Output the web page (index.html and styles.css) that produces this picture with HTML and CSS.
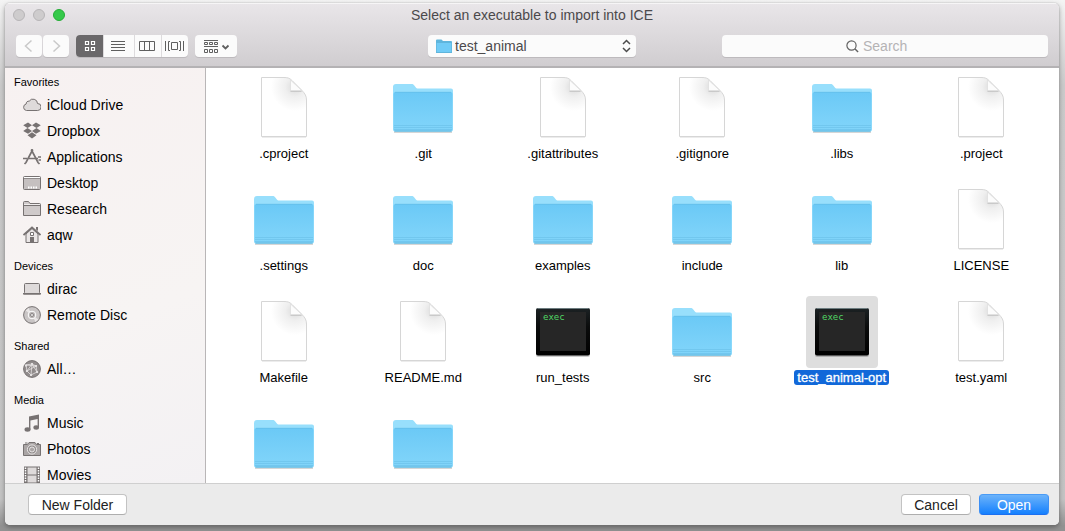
FILE: index.html
```html
<!DOCTYPE html>
<html lang="en">
<head>
<meta charset="utf-8">
<title>Select an executable to import into ICE</title>
<link rel="stylesheet" href="styles.css">
</head>
<body>
<svg class="defs" width="0" height="0" aria-hidden="true">
  <defs>
    <linearGradient id="folder-front" x1="0" y1="0" x2="0" y2="1">
      <stop offset="0" stop-color="#6bc9f6"/>
      <stop offset="1" stop-color="#82d5fa"/>
    </linearGradient>
    <radialGradient id="page-shade" gradientUnits="userSpaceOnUse" cx="47" cy="15" r="24">
      <stop offset="0" stop-color="#d9d9d9"/>
      <stop offset="0.4" stop-color="#efefef"/>
      <stop offset="1" stop-color="#ffffff"/>
    </radialGradient>
    <linearGradient id="exec-frame" x1="0" y1="0" x2="0" y2="1">
      <stop offset="0" stop-color="#1c2224"/>
      <stop offset="0.4" stop-color="#0b0c0c"/>
      <stop offset="1" stop-color="#000000"/>
    </linearGradient>
    <symbol id="folder" viewBox="0 0 72 72">
      <path d="M7 60h58" stroke="#000" stroke-opacity=".16" stroke-width="2"/>
      <path d="M6 15a3 3 0 0 1 3-3h15.500c1.200 0 2 .4 2.600 1.200l1.800 2.400c.6.700 1 1 2 1H64a2 2 0 0 1 2 2V57.500a2 2 0 0 1-2 2H8a2 2 0 0 1-2-2z" fill="#98dffc"/>
      <path d="M6.500 22a2 2 0 0 1 2-2h55a2 2 0 0 1 2 2v35.500a2 2 0 0 1-2 2h-55a2 2 0 0 1-2-2z" fill="url(#folder-front)"/>
      <path d="M8 20.300h56" stroke="#62bde8" stroke-width=".7"/>
      <path d="M7 53.500h58M7 55.500h58M7 57.500h58" stroke="#6cc1e9" stroke-width=".7"/>
      <path d="M7.500 59h57" stroke="#62b6dc" stroke-width="1"/>
    </symbol>
    <symbol id="page" viewBox="0 0 72 72">
      <path d="M14 65h44" stroke="#000" stroke-opacity=".1" stroke-width="1.500"/>
      <path d="M13.500 5.500h22.500c3.500 0 5.500.5 8 3l9.500 9.500c3.500 3.500 5 6 5 10v36.500h-45z" fill="url(#page-shade)" stroke="#d6d6d6"/>
      <path d="M42.500 8v10.800h11.500z" fill="#fcfcfc" stroke="#dedede" stroke-width=".8"/>
      <path d="M42.500 19.300h11" stroke="#c4c4c4" stroke-width="1" fill="none"/>
    </symbol>
    <symbol id="exec" viewBox="0 0 72 72">
      <rect x="9" y="13" width="54" height="48" rx="2" fill="#000" opacity=".2"/>
      <rect x="9" y="12" width="54" height="47.500" rx="2" fill="url(#exec-frame)"/>
      <path d="M10.500 12.500h51" stroke="#8fa4a8" stroke-width=".7"/>
      <rect x="13" y="16" width="46" height="39" fill="#262626"/>
      <text x="16" y="24" class="exec-text">exec</text>
    </symbol>
  </defs>
</svg>

<main class="dialog">
  <header class="titlebar">
    <div class="title-row">
      <div class="lights">
        <button class="light" aria-label="Close"></button>
        <button class="light" aria-label="Minimize"></button>
        <button class="light light-zoom" aria-label="Zoom"></button>
      </div>
      <h1 class="title">Select an executable to import into ICE</h1>
    </div>
    <div class="toolbar">
      <div class="tools">
        <div class="nav">
          <button class="tool" aria-label="Back"><svg width="26" height="22" viewBox="0 0 26 22"><path d="M15.500 5.500L9.500 11l6 5.500" fill="none" stroke="#c9c9c9" stroke-width="1.500"/></svg></button>
          <button class="tool" aria-label="Forward"><svg width="26" height="22" viewBox="0 0 26 22"><path d="M10.500 5.500l6 5.500-6 5.500" fill="none" stroke="#c9c9c9" stroke-width="1.500"/></svg></button>
        </div>
        <div class="views">
          <button class="view view-on" aria-label="Icon view" aria-pressed="true"><svg width="27" height="22" viewBox="0 0 27 22"><path d="M9.500 6.500h3v3h-3zM15.500 6.500h3v3h-3zM9.500 12.500h3v3h-3zM15.500 12.500h3v3h-3z" fill="none" stroke="#fff" stroke-width="1.200"/></svg></button>
          <button class="view" aria-label="List view"><svg width="30" height="22" viewBox="0 0 30 22"><path d="M7 6.500h14M7 9.500h14M7 12.500h14M7 15.500h14" stroke="#5f5f5f"/></svg></button>
          <button class="view" aria-label="Column view"><svg width="26" height="22" viewBox="0 0 26 22"><path d="M4.500 6.500h15v9h-15zM9.500 6.500v9M14.500 6.500v9" fill="none" stroke="#5f5f5f"/></svg></button>
          <button class="view" aria-label="Cover flow view"><svg width="26" height="22" viewBox="0 0 26 22"><path d="M3.500 6v10M21.500 6v10M8 6.500H6.500v9H8M17 6.500h1.500v9H17" fill="none" stroke="#5f5f5f"/><path d="M9.500 7.500h6v7h-6z" fill="#fbfbfb" stroke="#5f5f5f"/></svg></button>
        </div>
        <button class="tool tool-wide" aria-label="Arrange items"><svg width="42" height="22" viewBox="0 0 42 22"><path d="M9 5.500h14M9 11.500h14" stroke="#5f5f5f"/><path d="M9.500 7.500h3v2h-3zM14.500 7.500h3v2h-3zM19.500 7.500h3v2h-3zM9.500 14.500h3v3h-3zM14.500 14.500h3v3h-3zM19.500 14.500h3v3h-3z" fill="none" stroke="#5f5f5f"/><path d="M27.500 10.500l3 3 3-3" fill="none" stroke="#5f5f5f" stroke-width="1.800"/></svg></button>
      </div>
      <div class="path">
        <select class="path-select" aria-label="Folder"><option>test_animal</option></select>
        <svg class="path-folder" width="16" height="14" viewBox="0 0 16 14"><path d="M0 1.500Q0 .5 1 .5h4.500L7 2h8q1 0 1 1v11H0z" fill="#5fb5dc"/><path d="M.7 4h14.600v9H.7z" fill="#70cbf6"/></svg>
        <svg class="path-arrows" width="9" height="14" viewBox="0 0 9 14"><path d="M1 5l3.500-3.500L8 5M1 9l3.500 3.500L8 9" fill="none" stroke="#4c4c4c" stroke-width="1.500"/></svg>
      </div>
      <label class="search">
        <svg width="13" height="13" viewBox="0 0 13 13"><circle cx="5.500" cy="5.500" r="4.600" fill="none" stroke="#626262" stroke-width="1.200"/><path d="M8.800 8.800l3.300 3.300" stroke="#626262" stroke-width="1.400"/></svg>
        <input class="search-input" type="text" placeholder="Search" aria-label="Search">
      </label>
    </div>
  </header>

  <div class="content">
    <nav class="sidebar" aria-label="Places">
      <h2 class="group">Favorites</h2>
      <ul class="places">
        <li><a class="place" href="#"><svg class="glyph" viewBox="0 0 18 18"><path d="M3.500 14.500a3.300 3.300 0 0 1-.3-6.500 2.500 2.500 0 0 1 3-2.800A4.500 4.500 0 0 1 14.500 7.500a3.500 3.500 0 0 1 .2 7z" fill="#dedada" stroke="#777272"/></svg>iCloud Drive</a></li>
        <li><a class="place" href="#"><svg class="glyph" viewBox="0 0 18 18"><path d="M5 .5l4 2.700L4.500 6 .2 3.300zM13 .5L9 3.200 13.500 6l4.300-2.700zM.2 9L4.500 6 9 9l-4 2.800zM17.800 9L13.500 6 9 9l4 2.800zM4.500 13.300l4.500-3 4.500 3L9 16.500z" fill="#777272"/></svg>Dropbox</a></li>
        <li><a class="place" href="#"><svg class="glyph" viewBox="0 0 18 18"><path d="M9.800 1.500L3 14.500 1.500 16M8.200 1.500L15 14.500l1.500 1.500" fill="none" stroke="#777272" stroke-width="1.700"/><path d="M0 10.500h4M6 10.500h9M15 9h3M15.500 12H18" stroke="#777272" stroke-width="1.500"/></svg>Applications</a></li>
        <li><a class="place" href="#"><svg class="glyph" viewBox="0 0 18 18"><rect x=".5" y="2.500" width="17" height="13" rx="1" fill="#c5c0c0" stroke="#777272"/><path d="M1 3.500h16" stroke="#fff"/><path d="M1 4.500h16" stroke="#777272" stroke-width=".7"/><path d="M5 13.500h9" stroke="#fff" stroke-width="2" stroke-dasharray="1.500 1"/></svg>Desktop</a></li>
        <li><a class="place" href="#"><svg class="glyph" viewBox="0 0 18 18"><path d="M.500 15.500v-13q0-1 1-1h4l1.500 2h9.500q1 0 1 1v11z" fill="#cfcaca" stroke="#777272"/><path d="M1 5.500h16" stroke="#777272"/><path d="M1 4.500h16" stroke="#f0eded"/></svg>Research</a></li>
        <li><a class="place" href="#"><svg class="glyph" viewBox="0 0 18 18"><path d="M3 8l6-5.500L15 8v8.500H3z" fill="#eae6e6" stroke="#777272"/><path d="M.500 9L9 1.500 17.500 9" fill="none" stroke="#777272" stroke-width="1.700"/><path d="M13 1h2v4l-2-1.500zM7 11h4v5.500H7z" fill="#777272"/><path d="M7.500 6.500h3v3h-3z" fill="#fff" stroke="#777272"/></svg>aqw</a></li>
      </ul>
      <h2 class="group">Devices</h2>
      <ul class="places">
        <li><a class="place" href="#"><svg class="glyph" viewBox="0 0 18 18"><rect x="1.500" y="3.500" width="15" height="10" rx="1" fill="#dedada" stroke="#777272"/><path d="M0 13h18v.8q0 1-1 1H1q-1 0-1-1z" fill="#777272"/></svg>dirac</a></li>
        <li><a class="place" href="#"><svg class="glyph" viewBox="0 0 18 18"><circle cx="9" cy="9" r="8.400" fill="#c9c5c5" stroke="#777272"/><path d="M9 9L2.500 4.500 5.500 2zM9 9l6.500 4.500-3 2.500z" fill="#e9e6e6"/><circle cx="9" cy="9" r="3.800" fill="#bab6b6" stroke="#fff"/><circle cx="9" cy="9" r="1.500" fill="#eee" stroke="#777272" stroke-width=".8"/></svg>Remote Disc</a></li>
      </ul>
      <h2 class="group">Shared</h2>
      <ul class="places">
        <li><a class="place" href="#"><svg class="glyph" viewBox="0 0 18 18"><circle cx="9" cy="9" r="8.400" fill="#918c8c" stroke="#777272"/><path d="M3 5l6-1 4 2 1 6-6 3-4-4zM9 4L4 11M9 4l5 8M3 5l10 1M13 6l-9 5M9 4l-1 11" fill="none" stroke="#e4e1e1" stroke-width=".8"/><path d="M8 3h2v2H8zM12 5h2v2h-2zM3 10h2v2H3zM13 11h2v2h-2zM7 14h2v2H7zM2 4.500h2v2H2z" fill="#e4e1e1"/></svg>All…</a></li>
      </ul>
      <h2 class="group">Media</h2>
      <ul class="places">
        <li><a class="place" href="#"><svg class="glyph" viewBox="0 0 18 18"><path d="M6 2.500L16 .500v12.700h-1.400V5L7.400 6.400v9H6z" fill="#777272"/><ellipse cx="4.500" cy="15.500" rx="3" ry="2.200" fill="#777272"/><ellipse cx="13.200" cy="13.500" rx="2.800" ry="2.200" fill="#777272"/></svg>Music</a></li>
        <li><a class="place" href="#"><svg class="glyph" viewBox="0 0 18 18"><path d="M.500 4.500h4l1.500-2h6l1.500 2h4v11H.500z" fill="#aaa5a5" stroke="#777272"/><path d="M2 3h2.500M14 3.500h2" stroke="#777272"/><circle cx="9" cy="9.500" r="4.600" fill="#918c8c" stroke="#e8e5e5"/><circle cx="9" cy="9.500" r="2.500" fill="#aaa5a5" stroke="#e8e5e5"/></svg>Photos</a></li>
        <li><a class="place" href="#"><svg class="glyph" viewBox="0 0 18 18"><path d="M1 .5h16v17H1z" fill="#777272"/><path d="M4.500 1.500h9v7h-9zM4.500 9.500h9v7h-9z" fill="#dedada"/><path d="M2.500 1.500v15M15.500 1.500v15" stroke="#fff" stroke-width="1.500" stroke-dasharray="1.500 1"/></svg>Movies</a></li>
      </ul>
    </nav>

    <section class="files" aria-label="Files">
      <button class="file"><svg class="icon"><use href="#page"/></svg><span class="name">.cproject</span></button>
      <button class="file"><svg class="icon"><use href="#folder"/></svg><span class="name">.git</span></button>
      <button class="file"><svg class="icon"><use href="#page"/></svg><span class="name">.gitattributes</span></button>
      <button class="file"><svg class="icon"><use href="#page"/></svg><span class="name">.gitignore</span></button>
      <button class="file"><svg class="icon"><use href="#folder"/></svg><span class="name">.libs</span></button>
      <button class="file"><svg class="icon"><use href="#page"/></svg><span class="name">.project</span></button>
      <button class="file"><svg class="icon"><use href="#folder"/></svg><span class="name">.settings</span></button>
      <button class="file"><svg class="icon"><use href="#folder"/></svg><span class="name">doc</span></button>
      <button class="file"><svg class="icon"><use href="#folder"/></svg><span class="name">examples</span></button>
      <button class="file"><svg class="icon"><use href="#folder"/></svg><span class="name">include</span></button>
      <button class="file"><svg class="icon"><use href="#folder"/></svg><span class="name">lib</span></button>
      <button class="file"><svg class="icon"><use href="#page"/></svg><span class="name">LICENSE</span></button>
      <button class="file"><svg class="icon"><use href="#page"/></svg><span class="name">Makefile</span></button>
      <button class="file"><svg class="icon"><use href="#page"/></svg><span class="name">README.md</span></button>
      <button class="file"><svg class="icon"><use href="#exec"/></svg><span class="name">run_tests</span></button>
      <button class="file"><svg class="icon"><use href="#folder"/></svg><span class="name">src</span></button>
      <button class="file file-selected" aria-pressed="true"><svg class="icon"><use href="#exec"/></svg><span class="name">test_animal-opt</span></button>
      <button class="file"><svg class="icon"><use href="#page"/></svg><span class="name">test.yaml</span></button>
      <button class="file" aria-label="Folder"><svg class="icon"><use href="#folder"/></svg></button>
      <button class="file" aria-label="Folder"><svg class="icon"><use href="#folder"/></svg></button>
    </section>
  </div>

  <footer class="footer">
    <button class="action action-new">New Folder</button>
    <button class="action">Cancel</button>
    <button class="action action-default">Open</button>
  </footer>
</main>
</body>
</html>
```
FILE: styles.css
```css
* {
  box-sizing: border-box;
}

body {
  margin: 0;
  height: 100vh;
  padding: 3px 6px 6px 5px;
  display: flex;
  background: linear-gradient(#f4f4f4, #cbcbcb 16%, #c4c4c4 94%, #929292 99%);
  color: #000;
  font: 14px/16px "Liberation Sans", Arial, sans-serif;
}

button,
input,
select {
  font: inherit;
  color: inherit;
  border: 0;
  padding: 0;
  margin: 0;
  background: none;
}

svg {
  display: block;
}

.defs {
  position: absolute;
}

.dialog {
  flex: 1;
  min-width: 0;
  display: flex;
  flex-direction: column;
  border-radius: 5px;
  overflow: hidden;
  background: #fff;
  box-shadow: 0 0 1px #808080, 0 2px 5px rgba(0, 0, 0, 0.35);
}

.titlebar {
  background: linear-gradient(#e9e6e9, #d0cdd0);
  box-shadow: inset 0 1px #f6f5f6;
  border-bottom: 2px solid #b4b2b4;
  color: #4b494b;
}

.title-row {
  display: grid;
  grid-template-columns: 1fr auto 1fr;
  align-items: center;
  height: 23px;
  padding: 0 8px;
}

.lights {
  display: flex;
  gap: 8px;
}

.light {
  width: 12px;
  height: 12px;
  border: 1px solid #b7b5b7;
  border-radius: 50%;
  background: #cecccd;
}

.light-zoom {
  border-color: #24ad36;
  background: #35c94a;
}

.title {
  margin: 0;
  font-size: 14px;
  font-weight: 400;
}

.toolbar {
  display: grid;
  grid-template-columns: 1fr 208px 1fr;
  align-items: center;
  padding: 9px 11px;
}

.tools,
.nav,
.views {
  display: flex;
}

.tools {
  gap: 7px;
}

.nav {
  gap: 1px;
}

.tool,
.views,
.path-select,
.search {
  height: 22px;
  border-radius: 4px;
  background: #fbfbfb;
  box-shadow: 0 1px #bdbabd;
}

.views {
  overflow: hidden;
}

.view + .view {
  border-left: 1px solid #dddbdd;
}

.view-on {
  background: #6a686a;
}

.path {
  position: relative;
}

.path-select {
  display: block;
  width: 100%;
  padding-left: 27px;
  appearance: none;
}

.path-folder,
.path-arrows {
  position: absolute;
  top: 4px;
  pointer-events: none;
}

.path-folder {
  left: 8px;
}

.path-arrows {
  right: 5px;
}

.search {
  justify-self: end;
  display: flex;
  align-items: center;
  gap: 4px;
  width: 326px;
  max-width: 90%;
  padding-left: 124px;
}

.search-input {
  flex: 1;
  min-width: 0;
  outline: 0;
}

.search-input::placeholder {
  color: #b5b3b5;
  opacity: 1;
}

.content {
  flex: 1;
  min-height: 0;
  display: flex;
}

.sidebar {
  flex: 0 0 201px;
  overflow: hidden;
  border-right: 1px solid #b9b6b7;
  background: linear-gradient(160deg, #f7f1f1, #f7f4f3 60%, #f3f1f3);
}

.group {
  margin: 0;
  padding: 8px 9px 0;
  font-size: 11px;
  line-height: 20px;
  font-weight: 400;
}

.group:first-child {
  padding-top: 4px;
}

.places {
  list-style: none;
  margin: 0;
  padding: 0;
}

.place {
  display: flex;
  align-items: center;
  gap: 6px;
  height: 26px;
  padding-left: 18px;
  color: inherit;
  text-decoration: none;
}

.glyph {
  width: 18px;
  height: 18px;
}

.files {
  flex: 1;
  min-width: 0;
  display: grid;
  grid-template-columns: repeat(6, 1fr);
  grid-auto-rows: 112px;
  padding: 4px 8px 0;
  overflow: hidden;
  background: #fff;
}

.file {
  display: flex;
  flex-direction: column;
  align-items: center;
  gap: 2px;
  font-size: 13px;
}

.icon {
  width: 72px;
  height: 72px;
  border-radius: 4px;
}

.name {
  padding: 0 3px;
  line-height: 15px;
  border-radius: 3px;
}

.file-selected .icon {
  background: #dedede;
}

.file-selected .name {
  background: #1168d9;
  color: #fff;
  -webkit-text-stroke: 0.3px #fff;
}

.exec-text {
  font: 9px "DejaVu Sans Mono", monospace;
  fill: #4fd765;
}

.footer {
  display: flex;
  gap: 8px;
  padding: 10px 10px 10px 23px;
  border-top: 1px solid #cfcfcf;
  background: #ebebeb;
}

.action {
  width: 70px;
  height: 21px;
  border: 1px solid #c3c3c3;
  border-bottom-color: #aeaeae;
  border-radius: 4px;
  background: #fff;
  color: #222;
}

.action-new {
  width: 99px;
  margin-right: auto;
}

.action-default {
  border-color: #4a9bf5 #3c8ff5 #1c6fef;
  background: linear-gradient(#6cb3fa, #1480fe);
  color: #fff;
}
```
